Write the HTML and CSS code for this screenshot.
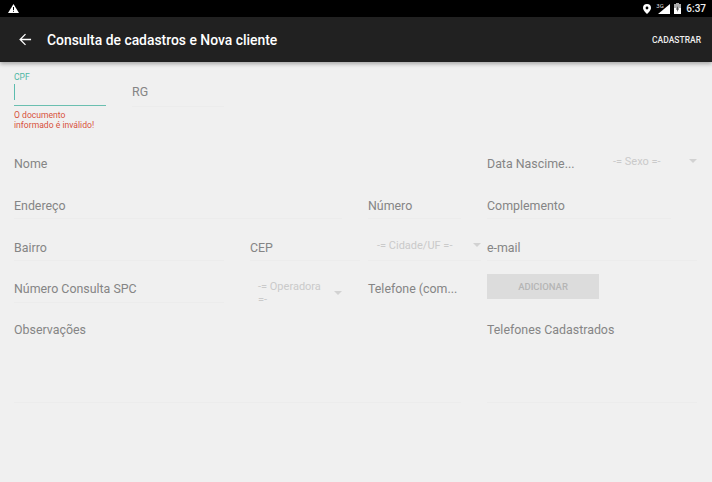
FILE: index.html
```html
<!DOCTYPE html>
<html lang="pt">
<head>
<meta charset="utf-8">
<title>Consulta de cadastros</title>
<link rel="stylesheet" href="styles.css">
</head>
<body>
<div class="status">
  <svg class="warn" width="11" height="9" viewBox="0 0 11 9"><path fill="#fff" d="M5.500 0 11 9H0Z"/><path fill="#000" d="M5 3h1v3H5zM5 6.800h1v1H5z"/></svg>
  <div class="status-right">
    <svg width="8" height="10" viewBox="0 0 8 10"><path fill="#fff" fill-rule="evenodd" d="M4 0a4 4 0 0 1 4 4c0 2.600-4 6-4 6S0 6.600 0 4a4 4 0 0 1 4-4Zm0 2.600a1.400 1.400 0 1 0 0 2.800 1.400 1.400 0 0 0 0-2.800Z"/></svg>
    <span class="signal"><span class="net">3G</span><svg width="12" height="10" viewBox="0 0 12 10"><path fill="#fff" d="M12 0v10H0Z"/></svg></span>
    <svg class="batt" width="7" height="11" viewBox="0 0 7 11"><path fill="#aaa" d="M2 0h3v1h2v4H0V1h2Z"/><path fill="#fff" d="M0 5h7v6H0Z"/><path fill="#222" d="M4 3 2 6.500h1.500L3 9l2-3.500H3.500Z"/></svg>
    <span class="clock">6:37</span>
  </div>
</div>
<header class="appbar">
  <svg class="back" width="13" height="13" viewBox="0 0 14 14"><path fill="none" stroke="#fff" stroke-width="1.400" d="M13 7H1.500M7 1.200 1.200 7 7 12.800"/></svg>
  <h1 class="title">Consulta de cadastros e Nova cliente</h1>
  <span class="action">CADASTRAR</span>
</header>
<main class="form">
  <div class="doc-row">
    <div class="cpf">
      <span class="float-label">CPF</span>
      <div class="cpf-input"><span class="caret"></span></div>
      <p class="error">O documento<br>informado é inválido!</p>
    </div>
    <div class="field rg">RG</div>
  </div>
  <div class="row row-nome">
    <div class="field no-line">Nome</div>
    <div class="field no-line">Data Nascime...</div>
    <div class="spin"><span>-= Sexo =-</span><i class="arrow"></i></div>
  </div>
  <div class="row row-end">
    <div class="field">Endereço</div>
    <div class="field">Número</div>
    <div class="field">Complemento</div>
  </div>
  <div class="row row-bairro">
    <div class="field">Bairro</div>
    <div class="field">CEP</div>
    <div class="spin spin-line"><span>-= Cidade/UF =-</span><i class="arrow"></i></div>
    <div class="field">e-mail</div>
  </div>
  <div class="row row-spc">
    <div class="field">Número Consulta SPC</div>
    <div class="spin spin-wrap"><span>-= Operadora =-</span><i class="arrow"></i></div>
    <div class="field no-line">Telefone (com...</div>
    <button class="add" type="button">ADICIONAR</button>
  </div>
  <div class="row row-obs">
    <div class="field area">Observações</div>
    <div class="field area">Telefones Cadastrados</div>
  </div>
</main>
</body>
</html>
```
FILE: styles.css
```css
* { box-sizing: border-box; }
html, body { margin: 0; height: 100%; }
body {
  width: 712px;
  height: 482px;
  overflow: hidden;
  background: #f0f0f0;
  font-family: Roboto, "Liberation Sans", sans-serif;
  color: #858585;
}
.status {
  height: 17px;
  background: #000;
  display: flex;
  align-items: center;
  justify-content: space-between;
  padding: 0 6px 0 8px;
}
.status-right { display: flex; align-items: center; color: #fff; }
.signal { position: relative; display: flex; margin-left: 7px; }
.net {
  font-size: 6px;
  line-height: 6px;
  position: absolute;
  left: -2px;
  top: -1px;
  color: #ddd;
}
.batt { margin-left: 4px; }
.clock { font-size: 10px; font-weight: 500; margin-left: 5px; color: #eee; }
.appbar {
  height: 45px;
  background: #212121;
  display: flex;
  align-items: center;
  padding: 0 11px 0 19px;
  box-shadow: 0 2px 4px rgba(0,0,0,.3);
  position: relative;
}
.title {
  margin: 0 0 0 15px;
  font-size: 13.900px;
  font-weight: 500;
  color: #fff;
  flex: 1;
}
.action { font-size: 8.500px; font-weight: 500; color: #eee; }
.form { padding-left: 14px; }
.doc-row {
  display: grid;
  grid-template-columns: 92px 92px;
  column-gap: 26px;
  height: 80px;
  padding-top: 11px;
}
.float-label { display: block; font-size: 8.500px; line-height: 9px; color: #4db6a4; }
.cpf-input { height: 24px; border-bottom: 1px solid #6abfb0; padding-top: 2px; }
.caret { display: block; width: 1px; height: 16px; background: #5bbcae; }
.error { margin: 4px 0 0; font-size: 8.600px; line-height: 10px; color: #d8503c; }
.field {
  font-size: 12.400px;
  line-height: 14px;
  padding-top: 14px;
  height: 35px;
  border-bottom: 1px solid #ececec;
  white-space: nowrap;
}
.rg { height: 34px; padding-top: 12px; }
.no-line { border-bottom-color: transparent; }
.row { display: grid; height: 42px; align-items: start; column-gap: 26px; }
.row-nome { grid-template-columns: 447px 100px 84px; }
.row-end { grid-template-columns: 328px 93px 184px; }
.row-bairro { grid-template-columns: 210px 26px 110px 8px 113px 6px 210px; column-gap: 0; }
.row-bairro > :nth-child(2) { grid-column: 3; }
.row-bairro > :nth-child(3) { grid-column: 5; }
.row-bairro > :nth-child(4) { grid-column: 7; }
.row-nome .field, .row-end .field, .row-bairro .field { padding-top: 15px; }
.row-spc { grid-template-columns: 210px 92px 93px 112px; }
.row-obs { grid-template-columns: 447px 210px; margin-top: -1px; }
.area { height: 94px; }
.spin {
  position: relative;
  height: 35px;
  padding: 13px 20px 0 0;
  font-size: 11px;
  line-height: 13px;
  color: #cacaca;
}
.spin-line { border-bottom: 1px solid #ececec; padding: 13px 14px 0 9px; white-space: nowrap; }
.arrow {
  position: absolute;
  right: 0;
  top: 17px;
  width: 0;
  height: 0;
  border: 4px solid transparent;
  border-top: 4px solid #d2d2d2;
  border-bottom: 0;
}
.spin-wrap { padding: 12px 16px 0 8px; }
.spin-wrap .arrow { top: 23px; }
.add {
  height: 25px;
  margin-top: 6px;
  border: 0;
  padding: 0;
  background: #dcdcdc;
  color: #b5b5b5;
  font: 500 9.500px Roboto, "Liberation Sans", sans-serif;
}
```
